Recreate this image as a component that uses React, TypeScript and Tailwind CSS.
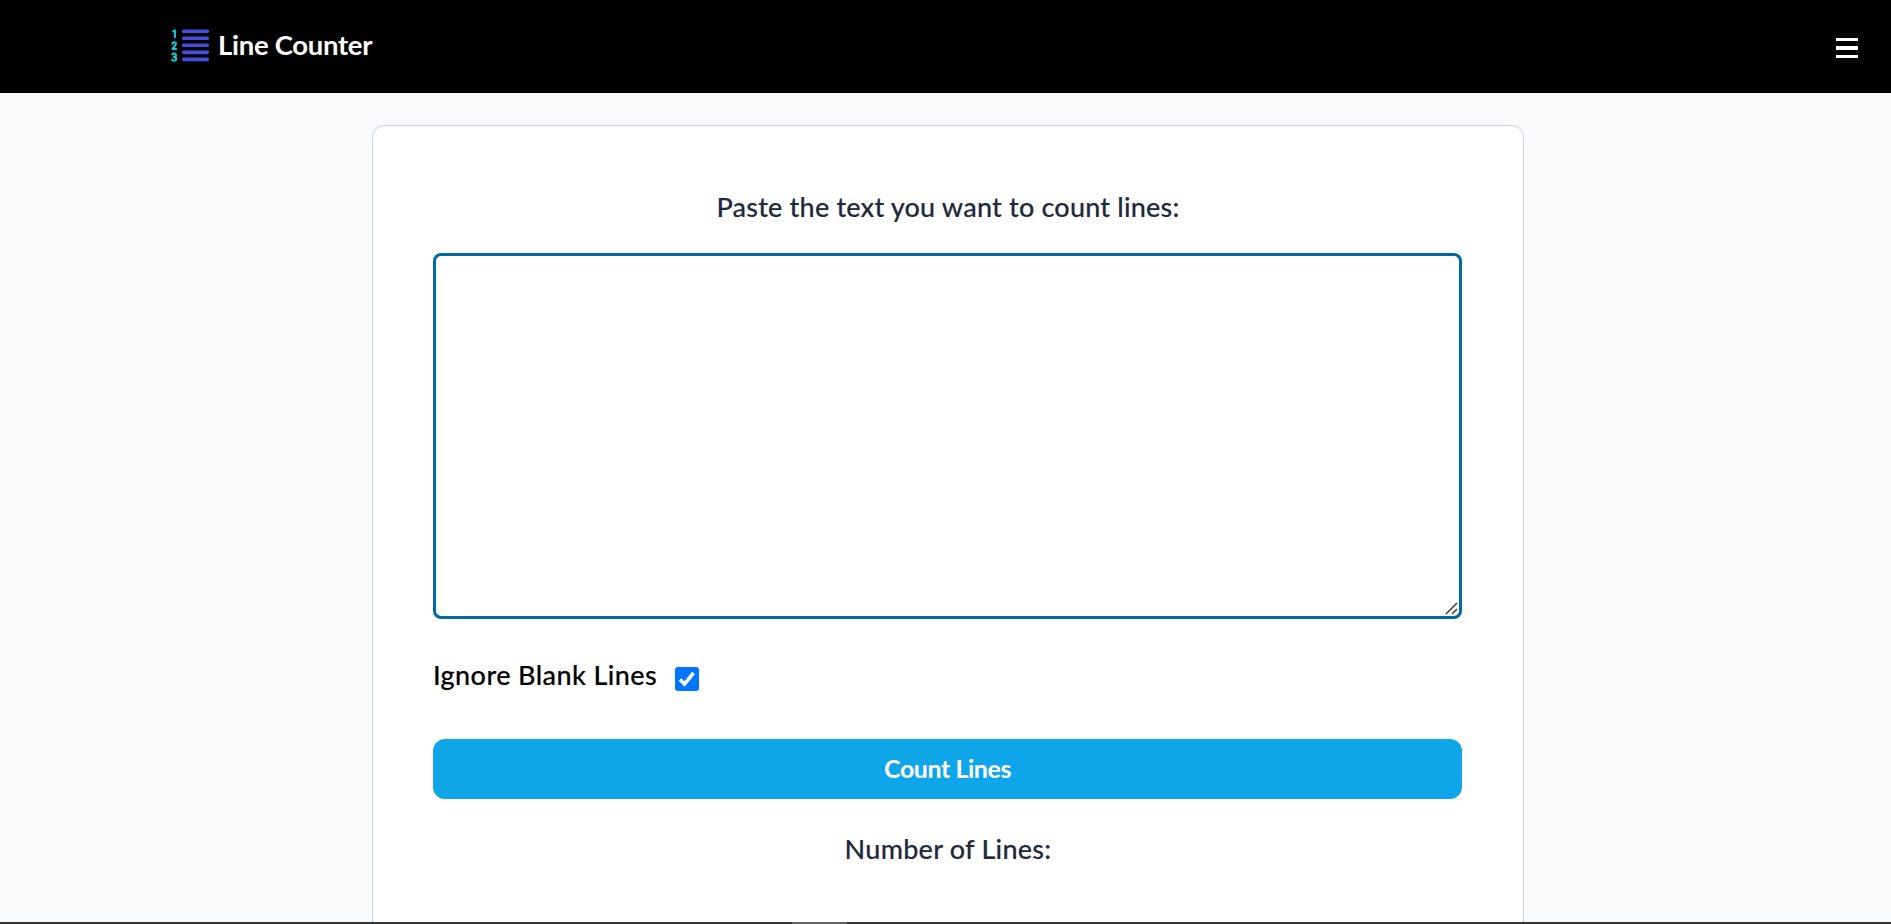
import { useState } from "react";

const Logo = () => (
  <svg width="38" height="34" viewBox="0 0 38 34" className="mr-2.5 shrink-0">
    <g fill="#444ee0">
      <rect x="11" y="1.4" width="27" height="3.6" rx="1.6" />
      <rect x="11" y="8.4" width="27" height="3.6" rx="1.6" />
      <rect x="11" y="15.4" width="27" height="3.6" rx="1.6" />
      <rect x="11" y="22.6" width="27" height="3.6" rx="1.6" />
      <rect x="11" y="29.6" width="27" height="3.6" rx="1.6" />
    </g>
    <g fill="none" stroke="#12cdd4" strokeWidth="2" strokeLinecap="round" strokeLinejoin="round">
      <path d="M2.2 3.3 L3.9 2.4 V9.2" />
      <path d="M1.4 15.7 C1.5 13.6 5 13.6 5 15.8 C5 17.6 2.4 19 1.5 20.9 H5.1" />
      <path d="M1.4 26.3 C2.1 24.9 5 25.1 5 27.2 C5 28.5 4 28.9 2.9 28.9 C4 28.9 5.2 29.4 5.2 30.8 C5.2 33.1 1.7 33.2 1.2 31.4" />
    </g>
  </svg>
);

const Navbar = () => (
  <nav className="flex h-[93px] shrink-0 items-center justify-between bg-black pr-[33px] pl-[171px] text-white">
    <a href="#home" className="mb-1 flex items-center">
      <Logo />
      <span className="-ml-px text-[27.5px] leading-9 font-bold tracking-[-0.3px]">Line Counter</span>
    </a>
    <button type="button" aria-label="Menu" className="mt-[3px] flex w-[22px] flex-col gap-[5px]">
      <span className="h-[3.5px] w-full bg-white" />
      <span className="h-[3.5px] w-full bg-white" />
      <span className="h-[3.5px] w-full bg-white" />
    </button>
  </nav>
);

const App = () => {
  const [text, setText] = useState("");
  const [ignoreBlank, setIgnoreBlank] = useState(true);
  const [count, setCount] = useState<number | null>(null);

  const countLines = () => {
    const lines = text.split("\n");
    setCount(ignoreBlank ? lines.filter((line) => line.trim() !== "").length : lines.length);
  };

  return (
    <div className="flex h-[924px] flex-col overflow-hidden bg-[#f8fafc] font-['Lato',sans-serif]">
      <Navbar />

      <main className="min-h-0 flex-1 overflow-hidden pt-8 pl-[372px]">
        <div className="flex h-[900px] w-[1152px] flex-col rounded-xl border border-[#cbd5e1] bg-white px-[60px] pt-[63px]">
          <h1 className="text-center text-[27px] leading-9 font-medium tracking-[0.2px] text-[#1e293b] [-webkit-text-stroke:0.15px]">
            Paste the text you want to count lines:
          </h1>

          <div className="relative mt-7 h-[366px] w-[1029px]">
            <textarea
              value={text}
              onChange={(e) => setText(e.target.value)}
              className="block h-full w-full resize-none rounded-lg border-3 border-[#0369a1] bg-white p-4 text-2xl outline-none"
            />
            {/* Resize grip */}
            <svg width="14" height="14" viewBox="0 0 14 14" className="pointer-events-none absolute right-[3px] bottom-[3px]">
              <path d="M1 12 L12 1 M7 12 L12 7" stroke="#444" strokeWidth="1.6" fill="none" />
            </svg>
          </div>

          <label className="mt-[38px] flex h-9 items-start">
            <span className="text-[27px] leading-9 font-medium tracking-[0.4px] text-black [-webkit-text-stroke:0.15px]">
              Ignore Blank Lines
            </span>
            <input
              type="checkbox"
              checked={ignoreBlank}
              onChange={(e) => setIgnoreBlank(e.target.checked)}
              className="peer sr-only"
            />
            <span className="mt-2.5 ml-[18px] flex size-6 items-center justify-center rounded-[3px] border-2 border-gray-500 peer-checked:border-[#0075ff] peer-checked:bg-[#0075ff]">
              <svg width="18" height="16" viewBox="0 0 18 16" className="shrink-0">
                <path d="M2 8.5 L6.5 13 L15.5 2" fill="none" stroke="#fff" strokeWidth="3.6" />
              </svg>
            </span>
          </label>

          <button
            type="button"
            onClick={countLines}
            className="mt-[46px] h-[60px] w-[1029px] rounded-xl bg-[#0ea5e9] text-[25px] font-bold tracking-[-0.45px] text-white"
          >
            Count Lines
          </button>

          <h2 className="mt-8 text-center text-[27px] leading-9 font-medium tracking-[0.25px] text-[#1e293b] [-webkit-text-stroke:0.15px]">
            Number of Lines:{count !== null && ` ${count}`}
          </h2>
        </div>
      </main>

      {/* Bottom scrollbar */}
      <div className="h-0.5 shrink-0 bg-[#333333] pl-[792px]">
        <div className="h-full w-[55px] bg-[#666666]" />
      </div>
    </div>
  );
};

export default App;
